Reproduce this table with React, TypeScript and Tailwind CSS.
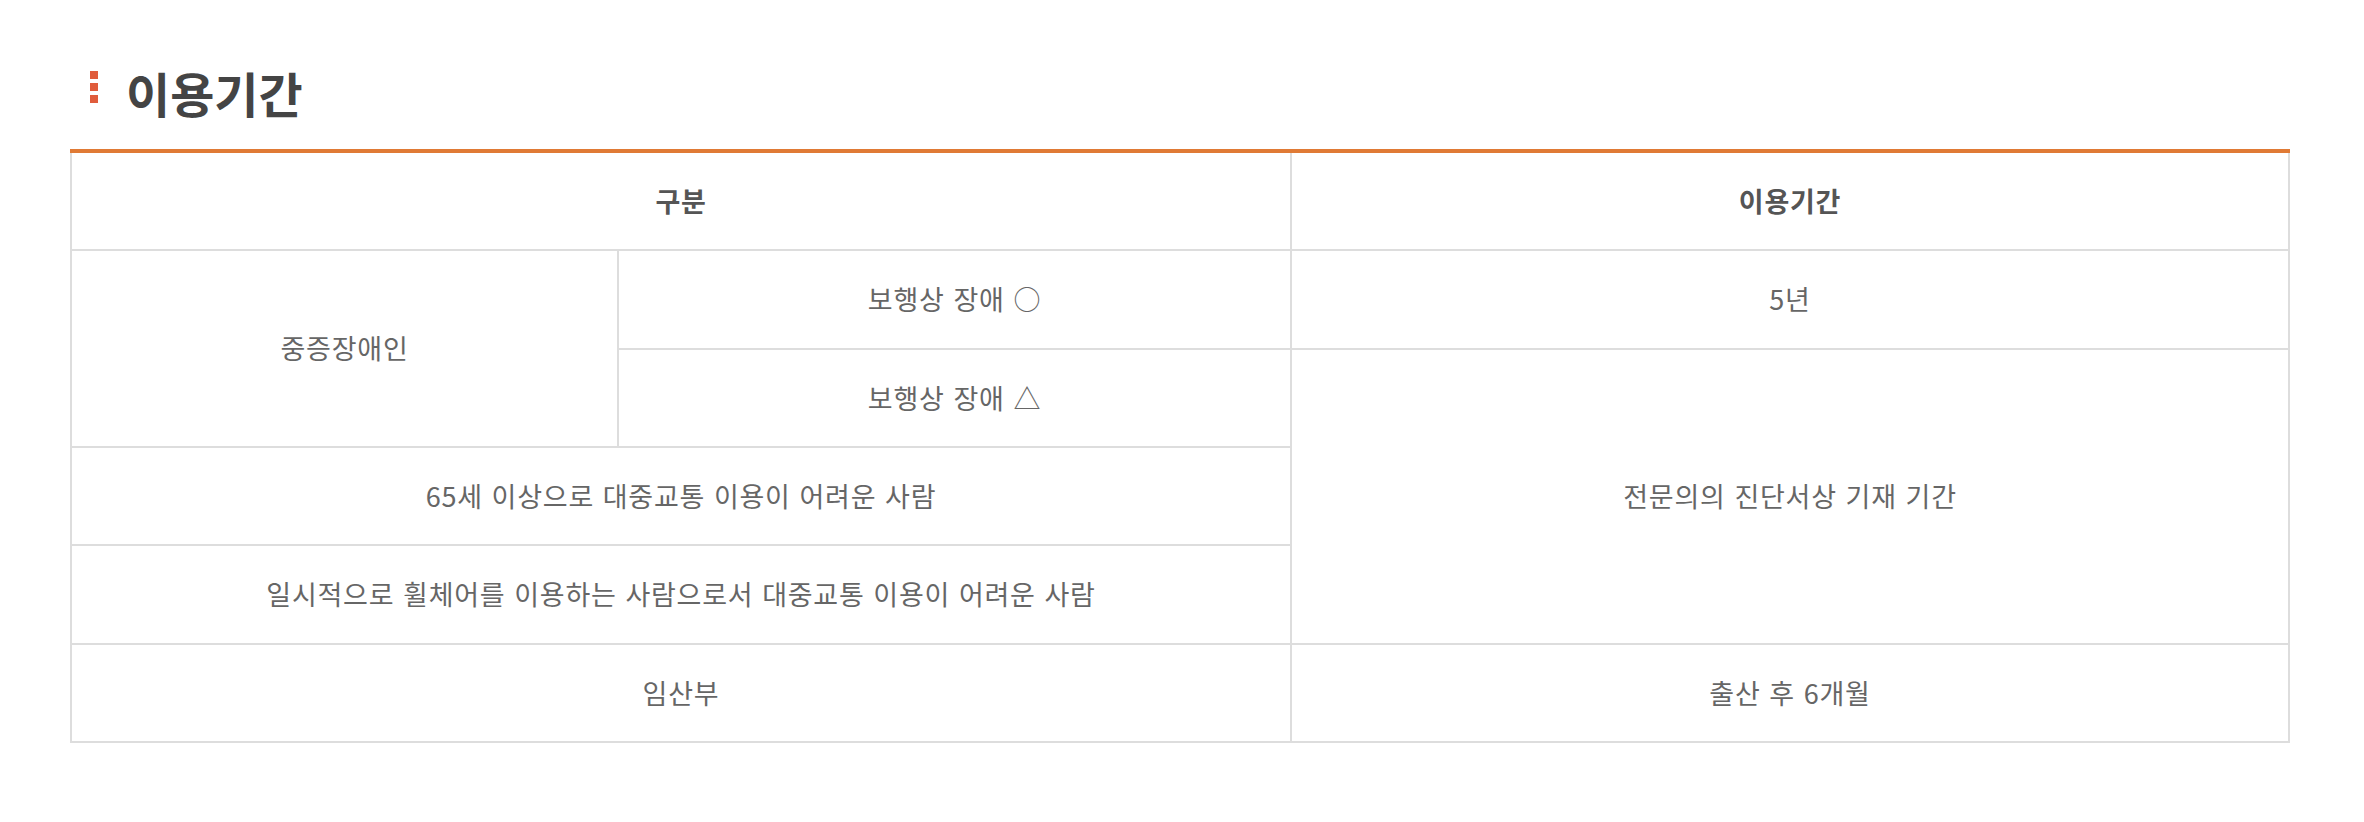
const cell = "flex items-center justify-center bg-white text-[27px] tracking-[0.75px] [word-spacing:2px] text-[#666]";
const head = "flex items-center justify-center bg-white text-[27px] tracking-[0.75px] font-bold text-[#555]";

export default function App() {
  return (
    <div
      className="min-h-screen bg-white pl-[70px] pt-[64px]"
      style={{ fontFamily: '"Noto Sans CJK KR", "Noto Sans", sans-serif' }}
    >
      {/* title */}
      <div className="flex items-center h-[56px] mb-[29px]">
        <div className="ml-[20px] flex flex-col gap-[4px] -mt-[10px]">
          <span className="block w-[8px] h-[8px] bg-[#e05c3c]" />
          <span className="block w-[8px] h-[8px] bg-[#e05c3c]" />
          <span className="block w-[8px] h-[8px] bg-[#e05c3c]" />
        </div>
        <h2 className="ml-[28px] text-[48px] font-bold text-[#444] leading-[56px]">이용기간</h2>
      </div>

      {/* table */}
      <div className="w-[2220px] grid grid-cols-[545px_671px_996px] grid-rows-[96px_97px_96px_96px_97px_96px] gap-[2px] bg-[#dddddd] px-[2px] pb-[2px] border-t-4 border-[#e07a35]">
        <div className={`${head} col-span-2`}>구분</div>
        <div className={head}>이용기간</div>

        <div className={`${cell} row-span-2`}>중증장애인</div>
        <div className={cell}>보행상 장애 ○</div>
        <div className={cell}>5년</div>

        <div className={cell}>보행상 장애 △</div>
        <div className={`${cell} row-span-3`}>전문의의 진단서상 기재 기간</div>

        <div className={`${cell} col-span-2`}>65세 이상으로 대중교통 이용이 어려운 사람</div>
        <div className={`${cell} col-span-2`}>일시적으로 휠체어를 이용하는 사람으로서 대중교통 이용이 어려운 사람</div>

        <div className={`${cell} col-span-2`}>임산부</div>
        <div className={cell}>출산 후 6개월</div>
      </div>
    </div>
  );
}
